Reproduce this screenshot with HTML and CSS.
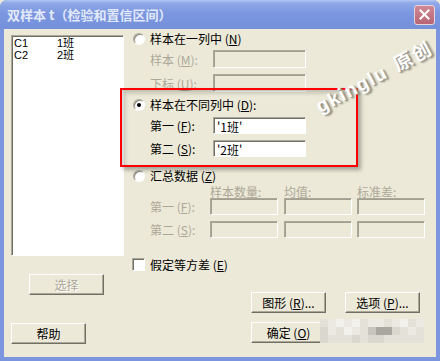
FILE: index.html
```html
<!DOCTYPE html>
<html lang="zh">
<head>
  <meta charset="UTF-8">
  <title>双样本 t</title>
  <link rel="stylesheet" href="styles.css">
</head>
<body>
  <div class="window">
    <div class="titlebar">
      <span class="title">双样本 t（检验和置信区间）</span>
      <span class="close-btn">
        <svg width="11" height="11" viewBox="0 0 11 11"><path d="M1.5 1.5 L9.5 9.5 M9.5 1.5 L1.5 9.5" stroke="#fff" stroke-width="2" stroke-linecap="square"/></svg>
      </span>
    </div>
    <div class="client">
      <div class="left">
        <div class="listbox">
          <div class="item"><span class="col">C1</span><span>1班</span></div>
          <div class="item"><span class="col">C2</span><span>2班</span></div>
        </div>
        <button class="btn btn-select" disabled>选择</button>
        <button class="btn btn-help">帮助</button>
      </div>

      <div class="right">
        <div class="row row-one">
          <span class="radio"></span><span>样本在一列中 (<u>N</u>)</span>
        </div>
        <div class="row field row-m off">
          <span class="lbl">样本 (<u>M</u>):</span><span class="box"></span>
        </div>
        <div class="row field row-u off">
          <span class="lbl">下标 (<u>U</u>):</span><span class="box"></span>
        </div>
        <div class="row row-two">
          <span class="radio checked"></span><span>样本在不同列中 (<u>D</u>):</span>
        </div>
        <div class="row field row-f">
          <span class="lbl">第一 (<u>F</u>):</span><span class="box on">'1班'</span>
        </div>
        <div class="row field row-s">
          <span class="lbl">第二 (<u>S</u>):</span><span class="box on">'2班'</span>
        </div>
        <div class="row row-sum">
          <span class="radio"></span><span>汇总数据 (<u>Z</u>)</span>
        </div>
        <div class="sum-row sum-first off">
          <span class="sum-lbl">第一 (<u>F</u>):</span>
          <span class="sbox"><span class="cap">样本数量:</span></span>
          <span class="sbox s2"><span class="cap">均值:</span></span>
          <span class="sbox s3"><span class="cap">标准差:</span></span>
        </div>
        <div class="sum-row sum-second off">
          <span class="sum-lbl">第二 (<u>S</u>):</span>
          <span class="sbox"></span>
          <span class="sbox s2"></span>
          <span class="sbox s3"></span>
        </div>
        <div class="row row-check">
          <span class="check"></span><span>假定等方差 (<u>E</u>)</span>
        </div>
        <div class="btn-row row-graph">
          <button class="btn">图形 (<u>R</u>)...</button>
          <button class="btn">选项 (<u>P</u>)...</button>
        </div>
        <div class="btn-row row-ok">
          <button class="btn">确定 (<u>O</u>)</button>
          <button class="btn">取消</button>
        </div>
      </div>

      <div class="highlight"></div>
      <div class="watermark">gkinglu 原创</div>
      <div class="mosaic">
        <i class="m1"></i><i class="m0"></i><i class="m5"></i><i class="m0"></i><i class="m5"></i><i class="m1"></i><i class="m0"></i><i class="m0"></i><i class="m1"></i><i class="m0"></i><i class="m5"></i><i class="m1"></i><i class="m0"></i>
        <i class="m2"></i><i class="m0"></i><i class="m1"></i><i class="m5"></i><i class="m0"></i><i class="m1"></i><i class="m3"></i><i class="m4"></i><i class="m4"></i><i class="m2"></i><i class="m1"></i><i class="m0"></i><i class="m1"></i>
        <i class="m2"></i><i class="m1"></i><i class="m1"></i><i class="m1"></i><i class="m2"></i><i class="m1"></i><i class="m2"></i><i class="m2"></i><i class="m1"></i><i class="m1"></i><i class="m1"></i><i class="m1"></i><i class="m1"></i>
      </div>
    </div>
  </div>
</body>
</html>
```

FILE: styles.css
```css
body {
  margin: 0;
  font-family: "Noto Sans CJK SC", "Noto Sans", sans-serif;
  font-size: 12px;
  background: #ece9d8;
  color: #000;
}
u {
  text-decoration: underline;
}

.window {
  width: 440px;
  height: 361px;
  display: flex;
  flex-direction: column;
  background: #7b96df;
  border-radius: 7px 7px 0 0;
  overflow: hidden;
}
.titlebar {
  height: 29px;
  flex: none;
  display: flex;
  align-items: center;
  justify-content: space-between;
  padding: 0 5px 0 7px;
  background: linear-gradient(#b3c8f2 0, #8ea8e8 3px, #7c97df 45%, #7490dc 100%);
}
.title {
  color: #e2e9f8;
  font-weight: bold;
  font-size: 13px;
  line-height: 16px;
}
.close-btn {
  width: 21px;
  height: 20px;
  box-sizing: border-box;
  display: flex;
  align-items: center;
  justify-content: center;
  border: 1px solid #e6d6dc;
  border-radius: 3px;
  background: linear-gradient(#cf8894, #b86574);
}

.client {
  flex: 1;
  margin: 0 4px 4px;
  background: #ece9d8;
  display: flex;
  position: relative;
}

/* left column */
.left {
  width: 113px;
  padding: 6px 0 0 7px;
  display: flex;
  flex-direction: column;
  align-items: flex-start;
}
.listbox {
  width: 113px;
  height: 221px;
  box-sizing: border-box;
  background: #fff;
  border: 1px solid;
  border-color: #aca899 #fff #fff #aca899;
  box-shadow: inset 1px 1px #716f64;
  padding: 1px 0 0 2px;
}
.item {
  display: flex;
  height: 12px;
  line-height: 12px;
  font-family: "Liberation Sans", "Noto Sans CJK SC", sans-serif;
  font-size: 11px;
}
.item .col {
  width: 43px;
}

.btn {
  width: 75px;
  height: 21px;
  box-sizing: border-box;
  padding: 0;
  font-family: inherit;
  font-size: 12px;
  line-height: 17px;
  color: #000;
  background: #ece9d8;
  border: 1px solid;
  border-color: #fff #716f64 #716f64 #fff;
  box-shadow: inset -1px -1px #aca899;
}
.btn:disabled {
  color: #aca899;
  text-shadow: 1px 1px #fff;
}
.btn-select {
  margin: 18px 0 0 18px;
}
.btn-help {
  margin-top: 28px;
}

/* right column */
.right {
  padding-left: 9px;
  display: flex;
  flex-direction: column;
}
.row {
  display: flex;
  align-items: center;
  line-height: 13px;
}
.off {
  color: #aca899;
}
.radio {
  width: 12px;
  height: 12px;
  box-sizing: border-box;
  border-radius: 50%;
  border: 1px solid;
  border-color: #aca899 #fff #fff #aca899;
  box-shadow: inset 1px 1px #8c8a80;
  background: #fff;
  margin-right: 5px;
  display: flex;
  align-items: center;
  justify-content: center;
}
.radio.checked::after {
  content: "";
  width: 4px;
  height: 4px;
  border-radius: 50%;
  background: #000;
}
.check {
  width: 13px;
  height: 13px;
  box-sizing: border-box;
  border: 1px solid;
  border-color: #aca899 #fff #fff #aca899;
  box-shadow: inset 1px 1px #716f64;
  background: #fff;
  margin: 0 5px 0 -1px;
}

.field {
  padding-left: 17px;
}
.lbl {
  width: 63px;
}
.box {
  width: 93px;
  height: 18px;
  box-sizing: border-box;
  border: 1px solid;
  border-color: #aca899 #fff #fff #aca899;
  box-shadow: inset 1px 1px #a19e90;
  padding: 1px 0 0 3px;
  line-height: 15px;
}
.box.on {
  height: 17px;
  background: #fff;
  color: #000;
  box-shadow: inset 1px 1px #716f64;
}

.row-one { margin-top: 3px; height: 13px; }
.row-m { margin-top: 5px; height: 18px; }
.row-u { margin-top: 6px; height: 18px; }
.row-two { margin-top: 6px; height: 13px; }
.row-f { margin-top: 6px; height: 17px; }
.row-s { margin-top: 6px; height: 17px; }
.row-sum { margin-top: 12px; height: 13px; }

.sum-row {
  display: flex;
  align-items: center;
  padding-left: 17px;
  height: 17px;
  line-height: 13px;
}
.sum-first { margin-top: 16px; }
.sum-second { margin-top: 6px; }
.sum-lbl {
  width: 60px;
}
.sbox {
  position: relative;
  width: 68px;
  height: 17px;
  box-sizing: border-box;
  border: 1px solid;
  border-color: #aca899 #fff #fff #aca899;
  box-shadow: inset 1px 1px #a19e90;
}
.sbox.s2 { margin-left: 6px; }
.sbox.s3 { margin-left: 5px; }
.cap {
  position: absolute;
  left: -1px;
  top: -14px;
  padding-right: 2px;
  background: #ece9d8;
  white-space: nowrap;
}

.row-check { margin-top: 20px; height: 13px; }

.btn-row {
  display: flex;
  gap: 19px;
  padding-left: 118px;
}
.row-graph { margin-top: 21px; }
.row-ok { margin-top: 9px; }

/* overlays from the screenshot */
.highlight {
  position: absolute;
  left: 116px;
  top: 59px;
  width: 238px;
  height: 79px;
  box-sizing: border-box;
  border: 2px solid #f00;
  box-shadow: 3px 3px 4px rgba(0, 0, 0, 0.3), inset 3px 3px 4px rgba(0, 0, 0, 0.18);
}
.watermark {
  position: absolute;
  left: 306px;
  top: 38px;
  width: 128px;
  text-align: center;
  white-space: nowrap;
  font-family: "Liberation Sans", "Noto Sans CJK SC", sans-serif;
  font-weight: bold;
  font-size: 19px;
  line-height: 22px;
  letter-spacing: 1.5px;
  word-spacing: 3px;
  color: #fff;
  text-shadow: 1px 1px 0 #9a988e, 2px 2px 2px #8a887f;
  transform: rotate(-28deg);
}
.mosaic {
  position: absolute;
  left: 316px;
  top: 290px;
  display: grid;
  grid-template-columns: repeat(13, 8px);
  grid-auto-rows: 8px;
}
.mosaic i { display: block; }
.m0 { background: #ebe9e1; }
.m1 { background: #e3e1d8; }
.m2 { background: #dad8ce; }
.m3 { background: #c7c5bd; }
.m4 { background: #a9a7a0; }
.m5 { background: #f2f1eb; }
```
